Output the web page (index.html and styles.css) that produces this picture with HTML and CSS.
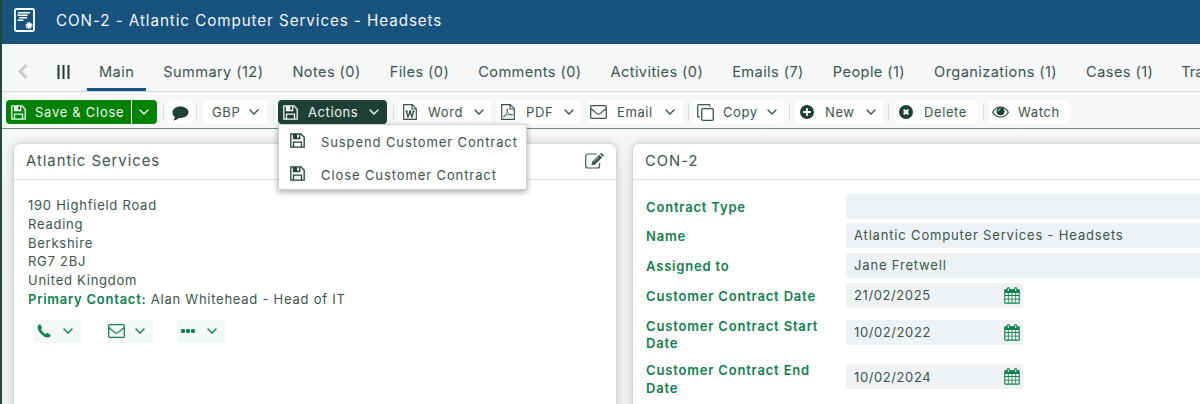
FILE: index.html
```html
<!DOCTYPE html>
<html lang="en">
<head>
    <meta charset="UTF-8">
    <meta name="viewport" content="width=device-width, initial-scale=1.0">
    <title>CON-2 - Atlantic Computer Services - Headsets</title>
    <link rel="stylesheet" href="styles.css">
</head>
<body>
    <svg class="sprite">
        <symbol id="chevron" viewBox="0 0 10 6"><path d="M1 1l4 4 4-4" fill="none" stroke="currentColor" stroke-width="1.4" stroke-linecap="round"/></symbol>
        <symbol id="save" viewBox="0 0 15 15">
            <path d="M.8.8h10l3.4 3.4v10H.8z" fill="none" stroke="currentColor" stroke-width="1.3" stroke-linejoin="round"/>
            <path d="M3.5 1v4.5h6.2V1M3.5 14V9.2h8V14" fill="none" stroke="currentColor" stroke-width="1.3"/>
            <path d="M4 1h3.2v4H4z" fill="currentColor"/>
        </symbol>
        <symbol id="mail" viewBox="0 0 17 14">
            <rect x=".7" y=".7" width="15.6" height="12.6" rx="1" fill="none" stroke="currentColor" stroke-width="1.3"/>
            <path d="M1 3.8c2.3 1.8 4 3.2 5.7 4.6 1.2.9 2.4.9 3.6 0C12 7 13.7 5.6 16 3.8" fill="none" stroke="currentColor" stroke-width="1.2"/>
        </symbol>
        <symbol id="calendar" viewBox="0 0 16 17">
            <path d="M1.5 2.2h13q1.3 0 1.3 1.3v12q0 1.3-1.3 1.3h-13q-1.3 0-1.3-1.3v-12q0-1.3 1.3-1.3zM1.3 6v2.1h2.6V6zm3.4 0v2.1h2.9V6zm3.7 0v2.1h2.9V6zm3.7 0v2.1h2.6V6zM1.3 9v2.7h2.6V9zm3.4 0v2.7h2.9V9zm3.7 0v2.7h2.9V9zm3.7 0v2.7h2.6V9zM1.3 12.6v3h2.6v-3zm3.4 0v3h2.9v-3zm3.7 0v3h2.9v-3zm3.7 0v3h2.6v-3z" fill="currentColor" fill-rule="evenodd"/>
            <path d="M1 2.5h14v3H1z" fill="currentColor"/>
            <path d="M4.3 1.7v2M11.7 1.7v2" stroke="currentColor" stroke-width="3.2" stroke-linecap="round"/>
            <path d="M4.3 1.5v2.5M11.7 1.5v2.5" stroke="#fff" stroke-width="1"/>
        </symbol>
    </svg>

    <header class="title-bar">
        <svg class="title-icon" viewBox="0 0 21 24">
            <rect x="1" y="1" width="19" height="22" rx="1.5" fill="none" stroke="#fff" stroke-width="1.8"/>
            <path d="M4 4.7h12M3.5 7.2h10M5 9.7h8M3.5 12.2h6" stroke="#fff" stroke-width="1.4"/>
            <circle cx="15" cy="17.5" r="2.6" fill="#fff"/>
            <circle cx="15" cy="17.5" r="3" fill="none" stroke="#fff" stroke-width="1.2" stroke-dasharray="1.3 1.05"/>
        </svg>
        <h1>CON-2 - Atlantic Computer Services - Headsets</h1>
    </header>

    <nav class="tabs">
        <svg class="tabs-back" viewBox="0 0 10 15"><path d="M8.5 1L2 7.5 8.5 14" fill="none" stroke="#c6c9ca" stroke-width="2.8"/></svg>
        <svg class="tabs-menu" viewBox="0 0 13 14"><path d="M1.5 0v14M6.5 0v14M11.5 0v14" stroke="#1e4037" stroke-width="2"/></svg>
        <a class="tab active">Main</a>
        <a class="tab">Summary (12)</a>
        <a class="tab">Notes (0)</a>
        <a class="tab">Files (0)</a>
        <a class="tab">Comments (0)</a>
        <a class="tab">Activities (0)</a>
        <a class="tab">Emails (7)</a>
        <a class="tab">People (1)</a>
        <a class="tab">Organizations (1)</a>
        <a class="tab">Cases (1)</a>
        <a class="tab last">Tra</a>
    </nav>

    <div class="toolbar">
        <div class="split">
            <button class="btn save"><svg class="icon"><use href="#save"/></svg>Save &amp; Close</button>
            <button class="btn save-more"><svg class="chev"><use href="#chevron"/></svg></button>
        </div>
        <span class="sep sep-a"></span>
        <button class="btn comment"><svg viewBox="0 0 17 15"><path d="M8.5.5C13 .5 16.5 3 16.5 6.3S13 12 8.5 12q-.8 0-1.6-.1C5.3 13.4 3.5 14.3 1 14.5c1-1 1.7-2.2 1.9-3.5C1.3 9.9.5 8.2.5 6.3.5 3 4 .5 8.5.5z" fill="currentColor"/></svg></button>
        <span class="sep sep-b"></span>
        <button class="btn currency">GBP<svg class="chev"><use href="#chevron"/></svg></button>
        <span class="sep sep-c"></span>
        <div class="dropdown">
            <button class="btn actions"><svg class="icon"><use href="#save"/></svg>Actions<svg class="chev"><use href="#chevron"/></svg></button>
            <div class="menu">
                <a class="menu-item"><svg class="icon"><use href="#save"/></svg>Suspend Customer Contract</a>
                <a class="menu-item"><svg class="icon"><use href="#save"/></svg>Close Customer Contract</a>
            </div>
        </div>
        <span class="sep sep-d"></span>
        <button class="btn word">
            <svg class="doc" viewBox="0 0 14 16"><path d="M.7.7h8.6l4 4v10.6H.7zM9 .7v4.3h4.3" fill="none" stroke="currentColor" stroke-width="1.2"/><path d="M2.5 7.3h2.2M6 7.3h2M9.3 7.3h2.2M3.5 7.5l1.5 5.5L7 7.5 9 13l1.5-5.5" fill="none" stroke="currentColor" stroke-width="1.4"/></svg>Word<svg class="chev"><use href="#chevron"/></svg>
        </button>
        <button class="btn pdf">
            <svg class="doc" viewBox="0 0 14 16"><path d="M.7.7h8.6l4 4v10.6H.7zM9 .7v4.3h4.3" fill="none" stroke="currentColor" stroke-width="1.2"/><path d="M2.6 13c1.6-.8 3.9-4.2 4-7.5.1-1-.8-1-.7 0 .2 2.5 2.6 5.5 5 5.8 1.2 0 1-1-.4-1-2.5 0-5.2.8-7.3 1.8-.8.5-1 .8-.6.9z" fill="none" stroke="currentColor" stroke-width=".8"/></svg>PDF<svg class="chev"><use href="#chevron"/></svg>
        </button>
        <button class="btn email"><svg class="mail"><use href="#mail"/></svg>Email<svg class="chev"><use href="#chevron"/></svg></button>
        <span class="sep sep-e"></span>
        <button class="btn copy">
            <svg class="copy-icon" viewBox="0 0 17 17"><rect x="4.7" y="4.7" width="11.6" height="11.6" rx="1" fill="none" stroke="currentColor" stroke-width="1.3"/><path d="M2.8 13H1.7q-1 0-1-1V1.7q0-1 1-1H12q1 0 1 1v1" fill="none" stroke="currentColor" stroke-width="1.3"/></svg>Copy<svg class="chev"><use href="#chevron"/></svg>
        </button>
        <span class="sep sep-f"></span>
        <button class="btn new">
            <svg class="round" viewBox="0 0 14 14"><circle cx="7" cy="7" r="7" fill="#1e4037"/><path d="M7 3.2v7.6M3.2 7h7.6" stroke="#fff" stroke-width="2"/></svg>New<svg class="chev"><use href="#chevron"/></svg>
        </button>
        <span class="sep sep-g"></span>
        <button class="btn delete">
            <svg class="round" viewBox="0 0 14 14"><circle cx="7" cy="7" r="7" fill="#1e4037"/><path d="M4.7 4.7l4.6 4.6M9.3 4.7L4.7 9.3" stroke="#fff" stroke-width="2.2"/></svg>Delete
        </button>
        <span class="sep sep-h"></span>
        <button class="btn watch">
            <svg class="eye" viewBox="0 0 17 12"><path d="M.7 6.2C2.5 3 5.3 1 8.5 1s6 2 7.8 5.2c-1.8 3-4.6 4.8-7.8 4.8S2.5 9.2.7 6.2z" fill="none" stroke="#1e4037" stroke-width="1.2"/><circle cx="8.5" cy="5.3" r="4" fill="#1e4037"/><path d="M6.3 5.3q0-2.2 2.2-2.3" fill="none" stroke="#fff" stroke-width=".9"/></svg>Watch
        </button>
    </div>

    <main class="panels">
        <section class="panel account">
            <div class="panel-head">
                <h2>Atlantic Services</h2>
                <svg class="edit" viewBox="0 0 19 16"><path d="M12 1H3Q.7 1 .7 3.3v9.4Q.7 15 3 15h9.3q2.3 0 2.3-2.3V10" fill="none" stroke="currentColor" stroke-width="1.2"/><path d="M6.5 12.3l.6-3.5L14.2 1.7l2.9 2.9-7.1 7.1z" fill="currentColor"/><path d="M15 .9l.7-.7q.5-.4 1 0l1.9 1.9q.4.5 0 1l-.7.7z" fill="currentColor"/><path d="M8.8 8.8l5-5" stroke="#fff" stroke-width=".6"/></svg>
            </div>
            <div class="address">
                <p>190 Highfield Road</p>
                <p>Reading</p>
                <p>Berkshire</p>
                <p>RG7 2BJ</p>
                <p>United Kingdom</p>
                <p><b>Primary Contact:</b> Alan Whitehead - Head of IT</p>
            </div>
            <div class="contact-actions">
                <button class="chip"><svg class="phone" viewBox="0 0 14 14"><path d="M.5 2.5Q.8 1 2.5.5L3.3.4 5.2 4 3.8 5.3q1.4 3 4.7 4.9L10 8.8l3.5 1.9q.3 2.3-2.7 2.9Q7.5 13.5 4 10 .3 6 .5 2.5z" fill="currentColor"/></svg><svg class="chev"><use href="#chevron"/></svg></button>
                <button class="chip"><svg class="mail"><use href="#mail"/></svg><svg class="chev"><use href="#chevron"/></svg></button>
                <button class="chip"><svg class="dots" viewBox="0 0 14 4"><rect width="4" height="4" rx="1.3" fill="currentColor"/><rect x="5" width="4" height="4" rx="1.3" fill="currentColor"/><rect x="10" width="4" height="4" rx="1.3" fill="currentColor"/></svg><svg class="chev"><use href="#chevron"/></svg></button>
            </div>
        </section>

        <section class="panel contract">
            <div class="panel-head"><h2>CON-2</h2></div>
            <div class="fields">
                <div class="field"><label>Contract Type</label><div class="value"></div></div>
                <div class="field"><label>Name</label><div class="value">Atlantic Computer Services - Headsets</div></div>
                <div class="field"><label>Assigned to</label><div class="value">Jane Fretwell</div></div>
                <div class="field"><label>Customer Contract Date</label><div class="value date">21/02/2025<svg class="cal"><use href="#calendar"/></svg></div></div>
                <div class="field tall"><label>Customer Contract Start Date</label><div class="value date">10/02/2022<svg class="cal"><use href="#calendar"/></svg></div></div>
                <div class="field tall"><label>Customer Contract End Date</label><div class="value date">10/02/2024<svg class="cal"><use href="#calendar"/></svg></div></div>
            </div>
        </section>
    </main>
</body>
</html>
```
FILE: styles.css
```css
* {
    margin: 0;
    padding: 0;
    box-sizing: border-box;
}

body {
    height: 404px;
    overflow: hidden;
    display: flex;
    flex-direction: column;
    border-left: 2px solid #1e4a40;
    background-color: #f5f7f9;
    font-family: Inter, "Liberation Sans", sans-serif;
    font-size: 13px;
    letter-spacing: 0.75px;
    color: #3b544d;
}

svg {
    display: block;
    flex: none;
}

.sprite {
    position: absolute;
    width: 0;
    height: 0;
}

.title-bar {
    flex: none;
    height: 44px;
    display: flex;
    align-items: center;
    padding: 0 0 3px 12px;
    background-color: #18527f;
    border-bottom: 1px solid #124a75;
    color: #f3f7fa;
}

.title-icon {
    width: 21px;
    height: 24px;
}

.title-bar h1 {
    margin-left: 21px;
    font-size: 15.2px;
    font-weight: 400;
    letter-spacing: 0.93px;
}

.tabs {
    flex: none;
    height: 48px;
    display: flex;
    align-items: stretch;
    gap: 5px;
    padding-top: 8px;
    border-bottom: 1px solid #d3d6d8;
    white-space: nowrap;
    overflow: hidden;
}

.tabs-back {
    width: 10px;
    height: 15px;
    margin: 12px 0 0 16px;
}

.tabs-menu {
    width: 13px;
    height: 14px;
    margin: 13px 12px 0 24px;
}

.tab {
    flex: none;
    padding: 0 12px;
    font-size: 14.6px;
    line-height: 40px;
    letter-spacing: 0.41px;
}

.tab.active {
    border-bottom: 3px solid #18527f;
}

.tab.last {
    padding: 0 0 0 11px;
    letter-spacing: 0;
}

.toolbar {
    flex: none;
    height: 37px;
    display: flex;
    align-items: flex-start;
    padding: 8px 0 0 4px;
    border-bottom: 1px solid #6d8c83;
}

.btn {
    height: 24px;
    display: flex;
    align-items: center;
    border: none;
    border-radius: 4px;
    background-color: #fff;
    color: inherit;
    font: inherit;
    letter-spacing: 0.6px;
    white-space: nowrap;
}

.btn .chev {
    margin-left: auto;
}

.chev {
    width: 10px;
    height: 6px;
}

.icon {
    width: 15px;
    height: 15px;
}

.split {
    display: flex;
    gap: 1px;
}

.save,
.save-more {
    background-color: #038203;
    color: #f0f8f0;
}

.save {
    width: 125px;
    padding-left: 5px;
    gap: 9px;
    border-radius: 4px 0 0 4px;
    letter-spacing: 0.72px;
}

.save-more {
    width: 25px;
    padding-right: 8px;
    border-radius: 0 4px 4px 0;
}

.sep {
    width: 1px;
    height: 16px;
    margin-top: 4px;
    background-color: #d9dcdf;
}

.sep-a { margin-left: 6px; margin-right: 4px; }
.sep-b { margin-left: 4px; margin-right: 6px; }
.sep-c { margin-left: 6px; margin-right: 4px; }
.sep-d { margin-left: 6px; margin-right: 4px; }
.sep-e { margin-left: 5px; margin-right: 4px; }
.sep-f { margin-left: 5px; margin-right: 5px; }
.sep-g { margin-left: 5px; margin-right: 6px; }
.sep-h { margin-left: 5px; margin-right: 5px; }

.comment {
    width: 24px;
    justify-content: center;
    color: #1e4037;
}

.comment svg {
    width: 17px;
    height: 15px;
    margin-top: 2px;
}

.currency {
    width: 64px;
    padding: 0 8px 0 9px;
}

.dropdown {
    position: relative;
}

.actions {
    width: 109px;
    padding: 0 8px 0 5px;
    gap: 10px;
    background-color: #1e4037;
    color: #f2f6f5;
}

.menu {
    position: absolute;
    z-index: 2;
    top: 24px;
    left: 0;
    width: 249px;
    height: 66px;
    border: 1px solid #cdd0d1;
    background-color: #fff;
    box-shadow: 0 2px 6px rgba(0, 0, 0, 0.35);
}

.menu-item {
    display: flex;
    align-items: center;
    gap: 16px;
    height: 33px;
    padding-left: 11px;
    letter-spacing: 0.9px;
    white-space: nowrap;
}

.menu-item .icon {
    margin-bottom: 2px;
    color: #1e4037;
}

.doc {
    width: 14px;
    height: 16px;
}

.mail {
    width: 17px;
    height: 14px;
}

.word {
    width: 93px;
    padding: 0 8px 0 5px;
    gap: 11px;
}

.pdf {
    width: 84px;
    margin-left: 5px;
    padding: 0 8px 0 5px;
    gap: 11px;
}

.email {
    width: 96px;
    margin-left: 7px;
    padding: 0 8px 0 3px;
    gap: 10px;
}

.copy {
    width: 91px;
    padding: 0 8px 0 4px;
    gap: 9px;
}

.copy-icon {
    width: 17px;
    height: 17px;
}

.new {
    width: 88px;
    padding: 0 9px 0 5px;
    gap: 11px;
}

.round {
    width: 14px;
    height: 14px;
}

.delete {
    width: 83px;
    padding-left: 4px;
    gap: 11px;
}

.watch {
    width: 81px;
    padding-left: 3px;
    gap: 9px;
}

.eye {
    width: 17px;
    height: 12px;
}

.panels {
    flex: 1;
    display: flex;
    align-items: flex-start;
    gap: 15px;
    padding: 14px 0 0 11px;
    background: linear-gradient(#f5f7f9, #f0f1f3 60px);
}

.panel {
    flex: none;
    height: 280px;
    border: 1px solid #d3d6d7;
    border-radius: 7px;
    background-color: #fff;
    box-shadow: 0 0 9px rgba(0, 0, 0, 0.16);
}

.account {
    width: 604px;
}

.contract {
    width: 620px;
}

.panel-head {
    height: 36px;
    display: flex;
    align-items: center;
    justify-content: space-between;
    padding: 0 12px 2px;
    border-bottom: 1px solid #dadddd;
}

.panel-head h2 {
    font-size: 14.8px;
    font-weight: 400;
    letter-spacing: 1px;
}

.edit {
    width: 19px;
    height: 16px;
}

.address {
    padding: 16px 0 0 14px;
    line-height: 18.8px;
}

b,
label {
    font-weight: 600;
    color: #11804f;
}

.contact-actions {
    display: flex;
    gap: 24px;
    padding: 11px 0 0 19px;
}

.chip {
    width: 48px;
    height: 23px;
    display: flex;
    align-items: center;
    justify-content: space-between;
    padding: 0 8px 0 4px;
    border: none;
    border-radius: 3px;
    background-color: #f4f7f8;
    color: #11804f;
}

.chip .mail {
    margin-left: -1px;
}

.phone {
    width: 14px;
    height: 14px;
}

.dots {
    width: 14px;
    height: 4px;
}

.fields {
    display: flex;
    flex-direction: column;
    padding: 13.5px 0 0 13px;
}

.field {
    height: 29.8px;
    display: flex;
    align-items: flex-start;
}

.field label {
    width: 200px;
    padding: 5px 15px 0 0;
    line-height: 17.3px;
    letter-spacing: 0.82px;
}

.field .value {
    flex: 1;
    height: 25px;
    padding: 0 3px 0 8px;
    border-radius: 3px;
    background-color: #eef2f5;
    line-height: 24px;
    letter-spacing: 0.83px;
}

.field .date {
    flex: none;
    width: 177px;
    display: flex;
    align-items: center;
    justify-content: space-between;
    letter-spacing: 0.6px;
}

.cal {
    width: 16px;
    height: 17px;
    color: #11804f;
}

.field.tall {
    height: 44.6px;
}

.field.tall .value {
    margin-top: 7px;
}
```
